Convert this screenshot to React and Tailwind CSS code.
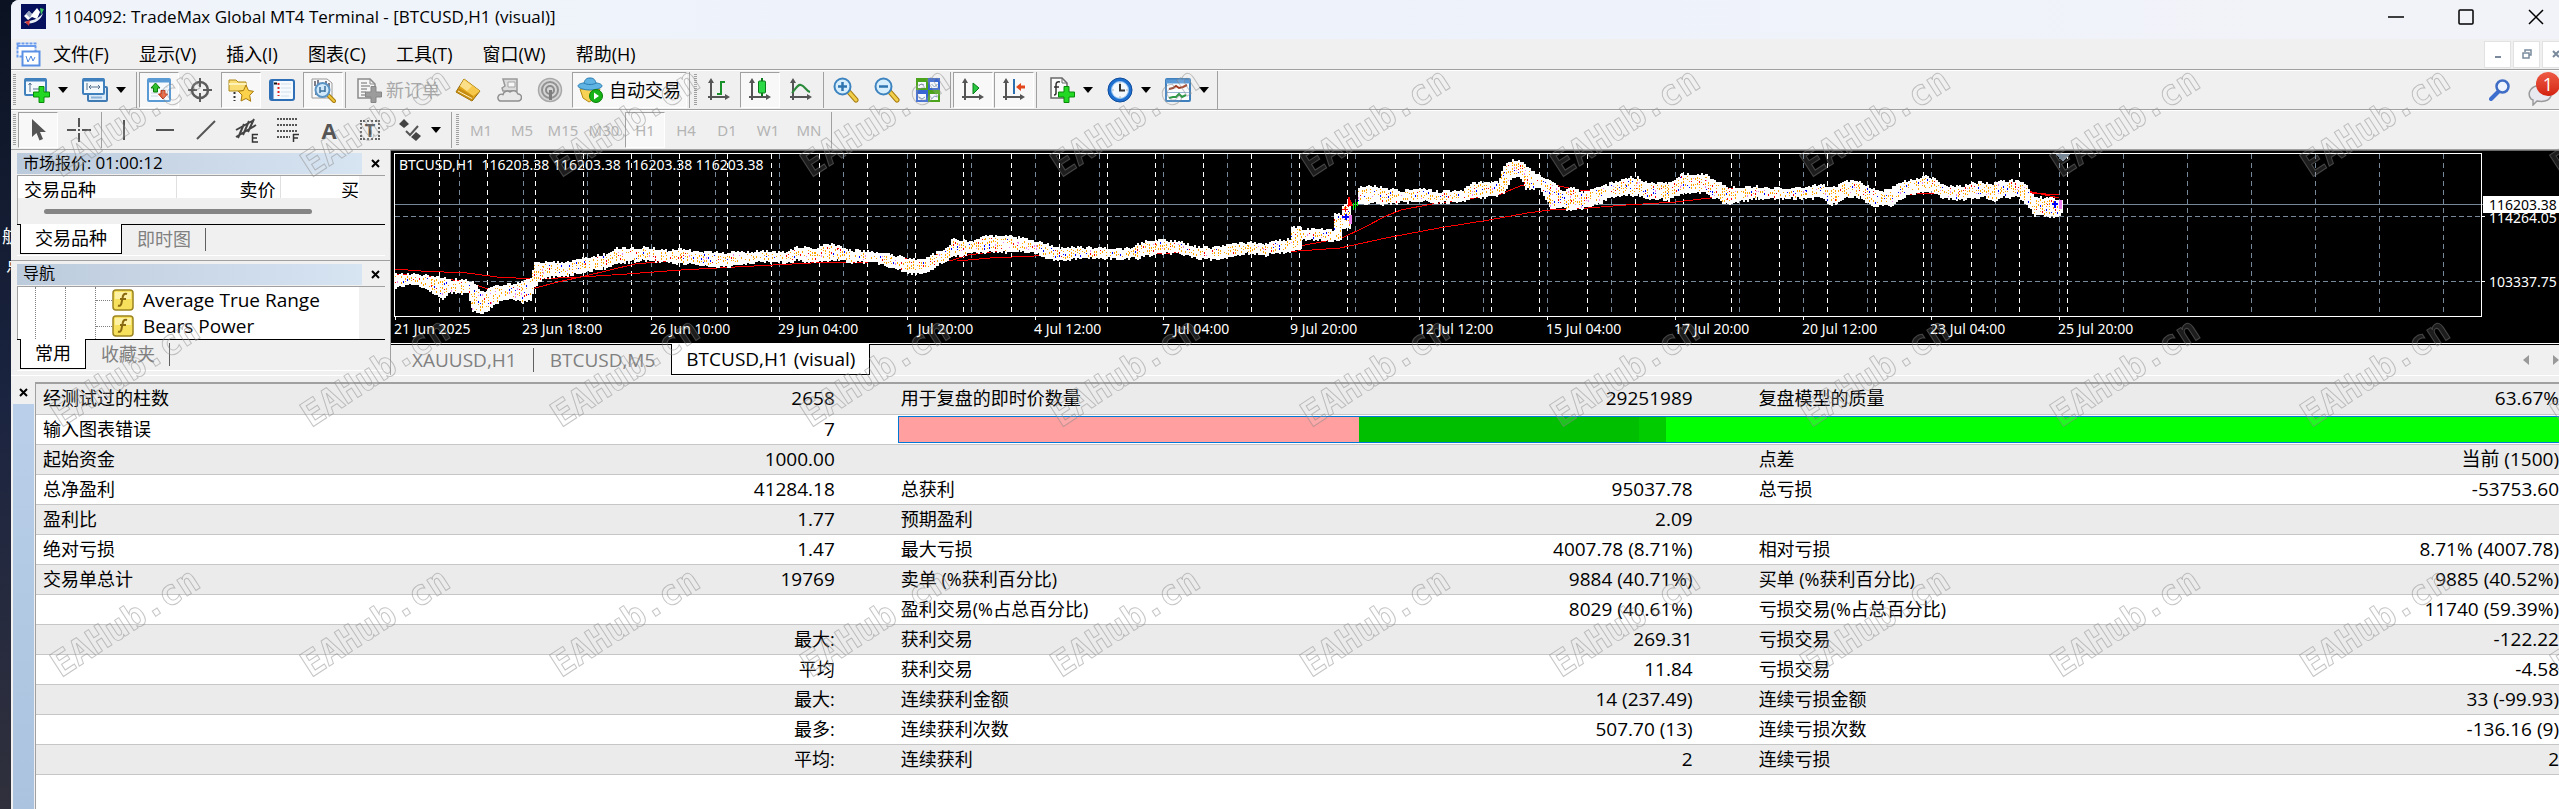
import React, { useState } from 'react';
import clsx from 'clsx';

const MENU = ['文件(F)', '显示(V)', '插入(I)', '图表(C)', '工具(T)', '窗口(W)', '帮助(H)'];
const PERIODS = ['M1', 'M5', 'M15', 'M30', 'H1', 'H4', 'D1', 'W1', 'MN'];
const CHART_TABS = ['XAUUSD,H1', 'BTCUSD,M5', 'BTCUSD,H1 (visual)'];

const REPORT = [
  ['经测试过的柱数', '2658', '用于复盘的即时价数量', '29251989', '复盘模型的质量', '63.67%'],
  ['输入图表错误', '7', 'bar'],
  ['起始资金', '1000.00', '', '', '点差', '当前 (1500)'],
  ['总净盈利', '41284.18', '总获利', '95037.78', '总亏损', '-53753.60'],
  ['盈利比', '1.77', '预期盈利', '2.09', '', ''],
  ['绝对亏损', '1.47', '最大亏损', '4007.78 (8.71%)', '相对亏损', '8.71% (4007.78)'],
  ['交易单总计', '19769', '卖单 (%获利百分比)', '9884 (40.71%)', '买单 (%获利百分比)', '9885 (40.52%)'],
  ['', '', '盈利交易(%占总百分比)', '8029 (40.61%)', '亏损交易(%占总百分比)', '11740 (59.39%)'],
  ['', '最大:', '获利交易', '269.31', '亏损交易', '-122.22'],
  ['', '平均', '获利交易', '11.84', '亏损交易', '-4.58'],
  ['', '最大:', '连续获利金额', '14 (237.49)', '连续亏损金额', '33 (-99.93)'],
  ['', '最多:', '连续获利次数', '507.70 (13)', '连续亏损次数', '-136.16 (9)'],
  ['', '平均:', '连续获利', '2', '连续亏损', '2'],
];

// share of each modelling quality level, in percent
const QUALITY = [
  { share: 27.7, className: 'bg-[#ff9f9f]' },
  { share: 16.9, className: 'bg-[#00be00]' },
  { share: 1.6, className: 'bg-[#00cc00]' },
  { share: 53.8, className: 'bg-[#00ff00]' },
];

// x, high, low
const BAND = [
  [[4, 124, 136], [22, 123, 133], [41, 126, 141], [51, 127, 148], [58, 129, 142], [76, 130, 142],
    [81, 131, 159], [91, 141, 163], [100, 137, 156], [114, 134, 147], [131, 132, 151], [139, 127, 149],
    [143, 111, 136], [152, 112, 126], [179, 111, 124], [194, 107, 121], [213, 104, 117], [225, 98, 112],
    [252, 97, 109], [275, 100, 111], [290, 99, 112], [313, 101, 114], [332, 102, 116], [363, 101, 111],
    [397, 101, 111], [405, 96, 109], [424, 98, 111], [432, 93, 109], [447, 94, 109], [458, 100, 111],
    [481, 101, 111], [500, 104, 116], [520, 109, 122], [535, 107, 122], [546, 101, 114], [556, 98, 109],
    [560, 88, 106], [581, 91, 102], [594, 85, 101], [612, 85, 101], [627, 87, 99], [646, 91, 102],
    [654, 93, 107], [662, 97, 110], [689, 97, 107], [738, 98, 107], [746, 93, 107], [765, 89, 102],
    [788, 91, 102], [803, 96, 107], [823, 97, 109], [842, 92, 105], [857, 92, 102], [872, 93, 104],
    [888, 90, 102], [898, 89, 101], [900, 76, 101], [909, 76, 99], [910, 78, 89], [935, 79, 89],
    [941, 79, 90], [943, 64, 90], [949, 64, 89], [951, 54, 76], [958, 50, 76], [960, 62, 74]],
  [[967, 37, 53], [983, 35, 52], [995, 38, 53], [1010, 40, 51], [1033, 38, 50], [1045, 41, 52],
    [1071, 39, 50], [1083, 32, 47], [1106, 31, 44], [1113, 14, 41], [1121, 9, 26], [1129, 11, 27],
    [1134, 15, 37], [1148, 26, 37], [1159, 29, 56], [1171, 41, 57], [1180, 37, 59], [1191, 41, 57],
    [1208, 37, 52], [1220, 32, 46], [1235, 27, 44], [1246, 27, 44], [1254, 32, 47], [1277, 33, 49],
    [1290, 24, 42], [1315, 23, 41], [1321, 29, 46], [1336, 37, 53], [1346, 37, 51], [1365, 36, 47],
    [1392, 38, 47], [1415, 36, 47], [1430, 33, 46], [1438, 37, 53], [1445, 36, 53], [1453, 30, 46],
    [1468, 31, 46], [1478, 37, 54], [1491, 41, 55], [1501, 37, 54], [1511, 31, 46], [1534, 26, 40],
    [1541, 27, 41], [1551, 34, 46], [1568, 36, 49], [1581, 32, 47], [1593, 32, 46], [1601, 34, 51],
    [1610, 30, 46], [1627, 30, 46], [1635, 36, 54], [1643, 47, 64], [1656, 47, 65], [1668, 49, 65],
    [1671, 50, 61]],
];

const SLOW_MA =
  '4,118 30,120 76,122 106,126 144,128 190,126 236,123 290,119 344,116 420,112 478,111 527,110 566,110 599,107 643,105 700,104 780,102 907,100 949,97 995,87 1048,77 1098,69 1136,62 1159,59 1178,58 1197,57 1235,54 1285,51 1319,47 1361,46 1450,45 1526,43 1641,42 1668,44';
const FAST_MA =
  '4,123 40,126 76,131 97,138 120,139 144,137 167,131 194,125 244,113 267,111 320,107 400,106 504,106 535,111 562,109 577,104 600,101 646,97 690,101 780,99 860,98 909,95 951,87 972,77 995,65 1010,59 1041,53 1083,47 1110,43 1129,35 1163,34 1188,39 1250,40 1300,34 1327,37 1361,39 1450,41 1526,41 1541,37 1600,40 1641,41 1668,47';

const TIMES = [
  '21 Jun 2025', '23 Jun 18:00', '26 Jun 10:00', '29 Jun 04:00', '1 Jul 20:00', '4 Jul 12:00',
  '7 Jul 04:00', '9 Jul 20:00', '12 Jul 12:00', '15 Jul 04:00', '17 Jul 20:00', '20 Jul 12:00',
  '23 Jul 04:00', '25 Jul 20:00',
];

const buildBand = () => {
  let seed = 7;
  const rand = () => {
    seed = (seed * 16807) % 2147483647;
    return seed / 2147483647;
  };
  let body = '';
  const dots = { orange: '', red: '', blue: '', violet: '' };
  BAND.forEach((part) => {
    for (let i = 0; i < part.length - 1; i++) {
      const [x0, t0, b0] = part[i];
      const [x1, t1, b1] = part[i + 1];
      for (let x = x0; x < x1; x += 2) {
        const k = (x - x0) / (x1 - x0);
        const top = Math.round(t0 + (t1 - t0) * k + rand() * 3 - 2);
        const bottom = Math.round(b0 + (b1 - b0) * k + rand() * 3 - 1);
        body += `M${x + 1} ${top}V${bottom}`;
        for (let y = top + 3; y < bottom - 3; y += 3) {
          const r = rand();
          if (r > 0.64) continue;
          const color = r < 0.47 ? 'orange' : r < 0.54 ? 'red' : r < 0.6 ? 'blue' : 'violet';
          dots[color] += `M${x}.5 ${y}v${rand() > 0.5 ? 2 : 1}`;
        }
      }
    }
  });
  return { body, dots };
};

const { body: bandPath, dots: bandDots } = buildBand();
const range = (from, to, step) => {
  const out = [];
  for (let v = from; v <= to; v += step) out.push(v);
  return out;
};

const PriceChart = () => (
  <svg
    viewBox="0 0 2168 192"
    preserveAspectRatio="xMinYMin slice"
    className="block h-[192px] w-full bg-black font-['Noto_Sans',sans-serif] text-[14px]"
    role="img"
    aria-label="BTCUSD,H1"
  >
    <g shapeRendering="crispEdges" fill="none">
      <path d={range(68, 2088, 64).map((x) => `M${x}.5 3V165`).join('')} stroke="#778899" strokeDasharray="5 4" />
      <path
        d={[...range(48, 336, 48), ...range(380, 1676, 48)].map((x) => `M${x}.5 3V165`).join('')}
        stroke="#fff"
        strokeDasharray="5 4"
      />
      <path d="M4 65.5H2090M4 130.5H2090" stroke="#778899" strokeDasharray="5 3" />
      <path d="M4 53.5H2092" stroke="#778899" />
      <path d="M3.5 2.5H2090.5V165.5H3.5Z" stroke="#fff" />
      <path d={range(4, 1700, 128).map((x) => `M${x}.5 166v3`).join('')} stroke="#fff" />
      <path d="M2091 65.5h3M2091 130.5h3" stroke="#fff" />
      <polyline points={SLOW_MA} stroke="#f00" />
      <polyline points={FAST_MA} stroke="#f00" />
      <path d={bandPath} stroke="#fff" strokeWidth="2" />
      <path d={bandDots.orange} stroke="#ffa500" />
      <path d={bandDots.red} stroke="#f00" />
      <path d={bandDots.blue} stroke="#00f" />
      <path d={bandDots.violet} stroke="#ee82ee" />
      <path d="M962.5 52v7M964.5 51v6M966.5 51v4" stroke="#0f0" />
      <path d="M958 46l3 8h-4zM951 58h6M954 55v6" fill="#f00" stroke="#f00" />
      <path d="M951 66h7M955 63v6M1661 53h6M1664 50v7" stroke="#00f" strokeWidth="2" />
      <path d="M958 64h3v9h-3zM1668 49h3v9h-3z" fill="#ee82ee" />
      <path d="M1665 3h14l-7 8z" fill="#778899" />
    </g>
    <g fill="#fff">
      <text x="8" y="19" xmlSpace="preserve">{'BTCUSD,H1  116203.38 116203.38 116203.38 116203.38'}</text>
      {TIMES.map((t, i) => (
        <text key={t} x={3 + i * 128} y="183">{t}</text>
      ))}
      <text x="2098" y="72">114264.05</text>
      <text x="2098" y="136">103337.75</text>
      <rect x="2092" y="45" width="76" height="17" />
      <text x="2098" y="59" fill="#000">116203.38</text>
    </g>
  </svg>
);

/* ---------- toolbar icons ---------- */

const Svg = ({ children, size = 26 }) => (
  <svg width={size} height={size} viewBox="0 0 26 26" fill="none" aria-hidden="true" className="shrink-0">
    {children}
  </svg>
);

const Plus = ({ x = 9, y = 9, fill = '#22d822', stroke = '#0a8a0a' }) => (
  <path
    transform={`translate(${x} ${y})`}
    d="M6 0.5h5v5.5h5.5v5H11v5.5H6V11H.5V6H6z"
    fill={fill}
    stroke={stroke}
    strokeLinejoin="round"
  />
);

const Axes = ({ children }) => (
  <Svg>
    <path d="M5 4v19M2 20h19" stroke="#555" strokeWidth="2" />
    <path d="M5 1l3 5H2zM24 20l-5 3v-6z" fill="#555" />
    {children}
  </Svg>
);

const Lens = ({ sign }) => (
  <Svg>
    <path d="M16 15l7 8" stroke="#a97d10" strokeWidth="5" strokeLinecap="round" />
    <path d="M16 15l7 8" stroke="#f2cf4a" strokeWidth="3" strokeLinecap="round" />
    <circle cx="9.5" cy="9.5" r="8" fill="#d7effc" stroke="#3c83bf" strokeWidth="2" />
    <path d={sign} stroke="#2f75b0" strokeWidth="2.5" />
  </Svg>
);

const icons = {
  newChart: (
    <Svg>
      <rect x="1" y="2" width="21" height="16" rx="1" fill="#f4f9fe" stroke="#3f80bd" strokeWidth="2" />
      <path d="M1 3h21" stroke="#3f80bd" strokeWidth="3" />
      <path d="M6 6v9M4.5 8L6 6l1.5 2M9 12h8" stroke="#54708c" />
      <Plus />
    </Svg>
  ),
  profiles: (
    <Svg>
      <rect x="6" y="10" width="19" height="14" rx="1" fill="#dcebf8" stroke="#3f7ab3" strokeWidth="2" />
      <rect x="1" y="2" width="21" height="15" rx="1" fill="#f4f9fe" stroke="#3f80bd" strokeWidth="2" />
      <path d="M1 3h21" stroke="#3f80bd" strokeWidth="3" />
      <path d="M5 6v7M8 10h10M16 8l2 2-2 2M9 8l-2 2 2 2" stroke="#54708c" />
      <path d="M9 20.5h11" stroke="#8bb2d6" strokeWidth="2" />
    </Svg>
  ),
  market: (
    <Svg>
      <rect x="2" y="2" width="22" height="22" rx="1" fill="#f7fbff" stroke="#5a9bd5" strokeWidth="2" />
      <path d="M2 4h22" stroke="#5a9bd5" strokeWidth="3" />
      <path d="M5 10h5M5 13h5M15 13h6M5 16h7M5 19h7M20 10h2" stroke="#c9d5e0" />
      <path d="M9.5 6l4.500 5h-2.500v4h-4v-4H5z" fill="#2fc02f" stroke="#0b7c0b" />
      <path d="M17 22l-4.500-5H15v-3.500h4V17h2.500z" fill="#f0623a" stroke="#b92c0b" />
    </Svg>
  ),
  crosshair: (
    <Svg>
      <circle cx="13" cy="13" r="8" stroke="#5c5c5c" strokeWidth="2.5" />
      <path d="M13 1v9M13 16v9M1 13h9M16 13h9" stroke="#5c5c5c" strokeWidth="2" />
    </Svg>
  ),
  navigator: (
    <Svg>
      <path d="M1 3h7l2 2h8v9H1z" fill="#f9dd73" stroke="#b08a1c" />
      <path d="M1 7h17" stroke="#fff2b8" strokeWidth="2" />
      <path d="M6.5 15v9" stroke="#333" strokeWidth="2" strokeDasharray="2 2" />
      <path d="M18 8l2.500 5.500 5 .8-3.800 4 1 6L18 21.500 13 24l1-6-3.700-3.700 5.200-.8z" fill="#fbd24a" stroke="#a87b10" />
    </Svg>
  ),
  dataWindow: (
    <Svg>
      <rect x="1" y="3" width="24" height="20" rx="2" fill="#f5faff" stroke="#2f6fb5" strokeWidth="2" />
      <path d="M3 4v18" stroke="#2f6fb5" strokeWidth="3" />
      <path d="M5 6.5h3" stroke="#111" strokeWidth="2" />
      <path d="M9.5 6v13" stroke="#e02020" strokeWidth="2" strokeDasharray="2 2" />
      <path d="M12 7h10M12 11h10M12 15h10M12 19h8" stroke="#d5dfe9" />
    </Svg>
  ),
  tester: (
    <Svg>
      <path d="M2 2h15l5 4v15H2z" fill="#fafafa" stroke="#999" />
      <path d="M5 4v5M8 3v6M16 4v5M19 6v6M6 14v4" stroke="#556" strokeWidth="1.5" />
      <path d="M18 18l6 6" stroke="#a97d10" strokeWidth="4" strokeLinecap="round" />
      <path d="M18 18l6 6" stroke="#f0c63a" strokeWidth="2" strokeLinecap="round" />
      <circle cx="12.5" cy="13" r="7" fill="#cfe9fb" stroke="#5b93c4" strokeWidth="2" />
      <path d="M10 10v6M15 9v6M10 14h5" stroke="#3c6f9d" strokeWidth="1.5" />
    </Svg>
  ),
  newOrder: (
    <Svg>
      <path d="M2 2h12l5 5v14H2z" fill="#f6f6f6" stroke="#8b8b8b" strokeWidth="1.5" />
      <path d="M14 2v5h5" stroke="#8b8b8b" />
      <path d="M5 6h6M5 9h9M5 12h6M5 15h5M5 18h4" stroke="#999" strokeWidth="1.5" />
      <Plus fill="#9c9c9c" stroke="#868686" />
    </Svg>
  ),
  book: (
    <Svg>
      <path d="M9 2L25 14 17 24 1 15z" fill="#e2a61c" stroke="#8f6508" />
      <path d="M9 2l16 12-7 5L5 9z" fill="#f6c94c" />
      <path d="M9 3l8 6-5 5-7-5z" fill="#fbe089" />
      <path d="M1 15l16 9 1-5L4 11z" fill="#c78d10" />
      <path d="M3 14l14 7.5" stroke="#fff3c4" />
    </Svg>
  ),
  cloud: (
    <Svg>
      <path d="M7 2h14v12H7l-1-3 3-2z" fill="#dcdcdc" stroke="#999" strokeWidth="1.5" />
      <path d="M12 5h7v5h-7z" fill="#f6f6f6" stroke="#a5a5a5" />
      <path d="M4 24h18a3.500 3.500 0 000-7 5 5 0 00-8-2 4.500 4.500 0 00-7 2.500A3.300 3.300 0 004 24z" fill="#e9e9e9" stroke="#8f8f8f" strokeWidth="1.5" />
    </Svg>
  ),
  signal: (
    <Svg>
      <circle cx="13" cy="13" r="11.5" fill="#d5d5d5" stroke="#a8a8a8" strokeWidth="1.5" />
      <circle cx="13" cy="13" r="8" stroke="#919191" strokeWidth="2" />
      <circle cx="13" cy="13" r="4" stroke="#8a8a8a" strokeWidth="2" />
      <path d="M12 13h3v10h-3z" fill="#7e7e7e" />
    </Svg>
  ),
  auto: (
    <Svg>
      <path d="M3 12h20l-4 9-7 4-6-4z" fill="#f7d254" stroke="#b58a14" />
      <path d="M1 9c0-2 4-3 6-3 1-4 3-5 6-5s5 1 6 5c2 0 6 1 6 3s-6 4-12 4S1 11 1 9z" fill="#5fb4e4" stroke="#2b7cb0" />
      <path d="M7 6c3 2 9 2 12 0" stroke="#2b7cb0" />
      <circle cx="19" cy="19" r="6.5" fill="#16b316" stroke="#0a7d0a" />
      <path d="M17 15.5l5 3.500-5 3.500z" fill="#fff" />
    </Svg>
  ),
  bars: (
    <Axes>
      <path d="M15 4v14M15 5h4M11 17h4" stroke="#18912a" strokeWidth="2" />
    </Axes>
  ),
  candles: (
    <Axes>
      <path d="M15 1v18" stroke="#0b7c1b" strokeWidth="2" />
      <rect x="11.5" y="4" width="7" height="12" rx="1" fill="#2bd845" stroke="#0b7c1b" />
    </Axes>
  ),
  line: (
    <Axes>
      <path d="M4 16C8 11 10 7 13 8c4 1 5 6 9 7" stroke="#2a8a3a" strokeWidth="2" />
    </Axes>
  ),
  zoomIn: <Lens sign="M5 9.5h9M9.5 5v9" />,
  zoomOut: <Lens sign="M5 9.5h9" />,
  tile: (
    <Svg>
      <rect x="1" y="1" width="12" height="12" fill="#4ca41c" />
      <rect x="13" y="1" width="12" height="12" fill="#3866d2" />
      <rect x="1" y="13" width="12" height="12" fill="#3866d2" />
      <rect x="13" y="13" width="12" height="12" fill="#4ca41c" />
      <path d="M3 5h8v6H3zM15 5h8v6h-8zM3 17h8v6H3zM15 17h8v6h-8z" fill="#f4f8ff" />
      <path d="M4 9l2-2 3 1M16.500 7l3 3 3-3M4 20l3 2 3-2M16.500 22l3-3 3 1" stroke="#7f98b8" />
    </Svg>
  ),
  autoScroll: (
    <Axes>
      <path d="M13 6l6 5-6 6z" fill="#27c83f" stroke="#0b7c1b" />
    </Axes>
  ),
  shift: (
    <Axes>
      <path d="M13 2v15" stroke="#2a6fb0" strokeWidth="2" />
      <path d="M15 10l5-4v2.500h4v3h-4V14z" fill="#e2481c" />
    </Axes>
  ),
  indicator: (
    <Svg>
      <path d="M2 1h11l5 5v15H2z" fill="#fdfdfd" stroke="#6a6a6a" strokeWidth="1.5" />
      <path d="M13 1v5h5" stroke="#6a6a6a" />
      <path d="M11 5c-3-1-4 1-4 3v8c0 2-1 2-2 2M5 10h5" stroke="#333" strokeWidth="1.5" />
      <Plus />
    </Svg>
  ),
  clock: (
    <Svg>
      <circle cx="13" cy="13" r="12" fill="#1d6fd0" stroke="#0f4a99" />
      <circle cx="13" cy="13" r="8.5" fill="#f3f8fd" stroke="#8fc1f2" />
      <path d="M13 7v6.500h5" stroke="#333" strokeWidth="2" />
      <path d="M13 5.500v1M13 19.500v1M5.500 13h1M19.500 13h1" stroke="#777" />
    </Svg>
  ),
  template: (
    <Svg>
      <rect x="1" y="2" width="24" height="22" rx="1" fill="#fbfdff" stroke="#3f80bd" strokeWidth="2" />
      <path d="M1 4.500h24" stroke="#5b9ad6" strokeWidth="4" />
      <path d="M4 12l4-1 3-2 3 2 4-1 4-2" stroke="#a33a1e" strokeWidth="2" />
      <path d="M2 15.500h22" stroke="#9ab8d4" />
      <path d="M4 21l4-1 3 0 3-3 3 3 4-2" stroke="#2f9a45" strokeWidth="2" />
    </Svg>
  ),
  cursor: (
    <Svg>
      <path d="M7 2v18l4.500-4 3 7.500 3.500-1.500-3-7h6z" fill="#555" />
    </Svg>
  ),
  cross: (
    <Svg>
      <path d="M13 1v9M13 16v9M1 13h9M16 13h9M12 13h2" stroke="#555" strokeWidth="2" />
    </Svg>
  ),
  vline: (
    <Svg>
      <path d="M13 3v20" stroke="#555" strokeWidth="2" />
    </Svg>
  ),
  hline: (
    <Svg>
      <path d="M4 13h18" stroke="#555" strokeWidth="2" />
    </Svg>
  ),
  trend: (
    <Svg>
      <path d="M4 22L22 4" stroke="#555" strokeWidth="2" />
    </Svg>
  ),
  channel: (
    <Svg>
      <path d="M2 13L20 3M2 20L22 8M4 21l6-14M9 18l6-14M14 15l6-13" stroke="#444" strokeWidth="2" />
      <path d="M24 17.500h-5.500V25H24M18 21h5" stroke="#333" strokeWidth="1.5" />
    </Svg>
  ),
  fibo: (
    <Svg>
      <path d="M2 2h21M2 8h21M2 14h21M2 20h13" stroke="#555" strokeWidth="2" strokeDasharray="2 1" />
      <path d="M18.500 17v8M18 17.500h6M18 21h5" stroke="#333" strokeWidth="1.5" />
    </Svg>
  ),
  arrows: (
    <Svg>
      <path d="M7 2l5 5-5 4-5-4zM19 15l5 4-5 5-5-4z" fill="#444" />
      <path d="M9 14l4 4 8-9" stroke="#555" strokeWidth="2" />
    </Svg>
  ),
};

const Caret = () => (
  <svg width="10" height="6" viewBox="0 0 10 6" aria-hidden="true" className="shrink-0">
    <path d="M0 0h10L5 6z" fill="#000" />
  </svg>
);

const PRESSED = 'border border-t-[#a0a0a0] border-l-[#a0a0a0] border-r-white border-b-white bg-[#f8f8f8]';

const ToolButton = ({ icon, label, pressed, children }) => (
  <button
    type="button"
    aria-label={label}
    className={clsx('flex h-9 w-10 shrink-0 items-center justify-center', pressed && PRESSED)}
  >
    {icon ? icons[icon] : children}
  </button>
);

const DropButton = ({ icon, label }) => (
  <button type="button" aria-label={label} className="flex h-9 w-[58px] shrink-0 items-center gap-2 pl-1.5">
    {icons[icon]}
    <Caret />
  </button>
);

const Divider = () => <div className="mx-0.5 h-9 w-px shrink-0 bg-[#a0a0a0]" />;
const Grip = () => <div className="mx-0.5 h-8 w-[3px] shrink-0 bg-[repeating-linear-gradient(#a0a0a0_0_1px,#f0f0f0_1px_2px)]" />;

const Toolbar = () => (
  <div className="flex h-10 items-center border-t border-b border-t-white border-b-[#a0a0a0]">
    <Grip />
    <DropButton icon="newChart" label="新图表" />
    <DropButton icon="profiles" label="图表夹" />
    <Divider />
    <div className="flex gap-px">
      <ToolButton icon="market" label="市场报价" pressed />
      <ToolButton icon="crosshair" label="数据" />
      <ToolButton icon="navigator" label="导航" pressed />
      <ToolButton icon="dataWindow" label="终端" />
      <ToolButton icon="tester" label="测试" pressed />
    </div>
    <Divider />
    <button type="button" className="flex h-9 w-[100px] shrink-0 items-center gap-1 pl-2 text-[18px] text-[#a8a8a8]">
      {icons.newOrder}
      新订单
    </button>
    <div className="flex gap-px">
      <ToolButton icon="book" label="编辑器" />
      <ToolButton icon="cloud" label="云" />
      <ToolButton icon="signal" label="信号" />
    </div>
    <button type="button" className={clsx('ml-0.5 flex h-9 w-[115px] shrink-0 items-center gap-1.5 pl-1', PRESSED)}>
      {icons.auto}
      <span className="text-[18px] whitespace-nowrap">自动交易</span>
    </button>
    <Divider />
    <Grip />
    <div className="flex gap-px">
      <ToolButton icon="bars" label="柱状图" />
      <ToolButton icon="candles" label="蜡烛图" pressed />
      <ToolButton icon="line" label="折线图" />
    </div>
    <Divider />
    <div className="flex gap-px">
      <ToolButton icon="zoomIn" label="放大" />
      <ToolButton icon="zoomOut" label="缩小" />
      <ToolButton icon="tile" label="平铺" />
    </div>
    <Divider />
    <div className="flex gap-px">
      <ToolButton icon="autoScroll" label="自动滚动" pressed />
      <ToolButton icon="shift" label="图表平移" pressed />
    </div>
    <Divider />
    <div className="flex h-full items-center border-r border-[#a0a0a0] pl-1">
      <DropButton icon="indicator" label="指标" />
      <DropButton icon="clock" label="周期" />
      <DropButton icon="template" label="模板" />
    </div>
    <div className="ml-auto flex items-center gap-4">
      <button type="button" aria-label="搜索">
        <svg width="22" height="22" viewBox="0 0 22 22" fill="none" aria-hidden="true">
          <path d="M10 12l-8 8" stroke="#3c6fce" strokeWidth="4" strokeLinecap="round" />
          <circle cx="13.5" cy="7.5" r="6" fill="#eef4ff" stroke="#3f6dc6" strokeWidth="2.5" />
        </svg>
      </button>
      <button type="button" aria-label="消息" className="relative h-9 w-8">
        <svg width="26" height="32" viewBox="0 0 26 32" aria-hidden="true">
          <path d="M9 12c-6 2-9 8-5 13l2 1v5l4-4c6 1 12 0 14-5z" fill="#e8e8f0" stroke="#9a9a9a" strokeWidth="1.5" />
        </svg>
        <span className="absolute top-0 left-[9px] flex h-6 w-6 items-center justify-center rounded-full bg-linear-to-b from-[#ee5a44] to-[#d3200d] text-[18px] text-white">
          1
        </span>
      </button>
    </div>
  </div>
);

const DrawBar = () => {
  const [period, setPeriod] = useState('H1');
  return (
    <div className="flex h-10 items-center border-t border-b border-t-white border-b-[#a0a0a0]">
      <Grip />
      <div className="flex gap-px">
        <ToolButton icon="cursor" label="光标" pressed />
        <ToolButton icon="cross" label="十字" />
      </div>
      <Divider />
      <div className="flex gap-px">
        <ToolButton icon="vline" label="垂直线" />
        <ToolButton icon="hline" label="水平线" />
        <ToolButton icon="trend" label="趋势线" />
        <ToolButton icon="channel" label="通道" />
        <ToolButton icon="fibo" label="斐波那契" />
        <ToolButton label="文字">
          <span className="text-[22px] font-bold text-[#555]">A</span>
        </ToolButton>
        <ToolButton label="标签">
          <span className="flex h-5 w-5 items-center justify-center border-2 border-dotted border-[#666] text-[18px] font-bold text-[#555]">
            T
          </span>
        </ToolButton>
        <DropButton icon="arrows" label="箭头" />
      </div>
      <Divider />
      <Grip />
      <div className="flex gap-px font-['Noto_Sans',sans-serif]">
        {PERIODS.map((p) => (
          <button
            key={p}
            type="button"
            onClick={() => setPeriod(p)}
            className={clsx(
              'flex h-9 w-10 shrink-0 items-center justify-center text-[15px] text-[#b4b4b4]',
              p === period && PRESSED,
            )}
          >
            {p}
          </button>
        ))}
      </div>
      <Divider />
    </div>
  );
};

const TitleBar = () => (
  <header className="flex h-[39px] items-center bg-linear-to-r from-[#f0f4fa] via-[#edf2fb] to-[#f2f3f8] pb-1.5 pl-2.5">
    <svg width="25" height="25" viewBox="0 0 25 25" aria-hidden="true">
      <rect width="25" height="25" fill="#06105c" />
      <path d="M3 18c5 4 17 0 19-9-4 6-12 8-19 9z" fill="#e8ecf4" />
      <path d="M3 12l5-5 3 3 5-6 3 4-3 7-5-2-4 3z" fill="#fff" />
      <path d="M5 10l3-3 3 3-2 4z" fill="#9aa6c0" />
      <path d="M19 4l4 1-3 6z" fill="#3fbf62" />
      <path d="M4 18l5-2-1 6z" fill="#d23a3a" />
    </svg>
    <h1 className="ml-2 text-[17px]">1104092: TradeMax Global MT4 Terminal - [BTCUSD,H1 (visual)]</h1>
    <div className="ml-auto flex gap-[54px] pr-[15px]">
      <button type="button" aria-label="最小化">
        <svg width="16" height="16" viewBox="0 0 16 16"><path d="M0 8h16" stroke="#000" strokeWidth="1.5" /></svg>
      </button>
      <button type="button" aria-label="最大化">
        <svg width="16" height="16" viewBox="0 0 16 16">
          <rect x="1" y="1" width="14" height="14" rx="1" fill="none" stroke="#000" strokeWidth="1.5" />
        </svg>
      </button>
      <button type="button" aria-label="关闭">
        <svg width="16" height="16" viewBox="0 0 16 16"><path d="M1 1l14 14M15 1L1 15" stroke="#000" strokeWidth="1.5" /></svg>
      </button>
    </div>
  </header>
);

const MenuBar = () => (
  <nav className="flex h-[31px] items-center border-b border-[#a0a0a0] pl-[5px]">
    <svg width="25" height="25" viewBox="0 0 25 25" fill="none" aria-hidden="true">
      <rect x="1.5" y="1.5" width="18" height="13" fill="#fff" stroke="#6b9bea" strokeWidth="2" strokeDasharray="3 1" />
      <path d="M1 4h19" stroke="#6b9bea" strokeWidth="2" />
      <rect x="6.5" y="9.5" width="17" height="14" fill="#fff" stroke="#5a8fe6" strokeWidth="2" />
      <path d="M10 14l2 6 3-6 2 5 2-4" stroke="#4b85dd" />
    </svg>
    <div className="ml-3 flex gap-[30px] text-[18px]">
      {MENU.map((m) => (
        <button key={m} type="button" className="whitespace-nowrap">{m}</button>
      ))}
    </div>
    <div className="ml-auto flex gap-0.5 overflow-hidden text-[#7a8a9c]">
      <button type="button" aria-label="最小化图表" className="flex h-[27px] w-[27px] items-center justify-center border border-[#e2e2e2] bg-white">
        <svg width="12" height="12" viewBox="0 0 12 12"><path d="M3 9h6" stroke="currentColor" strokeWidth="2" /></svg>
      </button>
      <button type="button" aria-label="还原图表" className="flex h-[27px] w-[27px] items-center justify-center border border-[#e2e2e2] bg-white">
        <svg width="10" height="10" viewBox="0 0 10 10" fill="none" stroke="currentColor" strokeWidth="1.5">
          <path d="M3 3V1h6v5H7M1 4h6v5H1z" />
        </svg>
      </button>
      <button type="button" aria-label="关闭图表" className="flex h-[27px] w-[17px] items-center justify-end border border-r-0 border-[#e2e2e2] bg-white">
        <svg width="7" height="8" viewBox="0 0 7 8"><path d="M1 1l6 6M7 1L1 7" stroke="currentColor" strokeWidth="2" /></svg>
      </button>
    </div>
  </nav>
);

const CloseMark = () => (
  <button type="button" aria-label="关闭面板" className="flex h-5 w-5 items-center justify-center">
    <svg width="9" height="9" viewBox="0 0 9 9"><path d="M1 1l7 7M8 1L1 8" stroke="#000" strokeWidth="2" /></svg>
  </button>
);

const PanelTabs = ({ active, other }) => (
  <div className="flex h-8 items-start border-b border-white">
    <div className="h-px w-[3px] bg-black" />
    <button type="button" className="h-[30px] border border-t-0 border-black bg-white px-[14px] text-[18px] leading-[29px]">
      {active}
    </button>
    <div className="flex h-[30px] flex-1 items-center border-t border-black pl-[15px]">
      <button type="button" className="pr-[14px] text-[18px] leading-[23px] text-[#808080]">{other}</button>
      <div className="h-[23px] w-px bg-[#606060]" />
    </div>
  </div>
);

const PanelTitle = ({ children }) => (
  <div className="flex items-center gap-[3px]">
    <h2 className="h-[21px] flex-1 bg-linear-to-r from-[#bccbdc] to-[#d7e4f2] pl-1.5 text-[16px] leading-[19px]">{children}</h2>
    <CloseMark />
  </div>
);

const FuncIcon = () => (
  <svg width="22" height="22" viewBox="0 0 22 22" aria-hidden="true">
    <rect x="1" y="1" width="20" height="20" rx="3" fill="#f7e05c" stroke="#9c8420" strokeWidth="1.5" />
    <path d="M3 3h16v7H3z" fill="#fcf1a4" />
    <path d="M15 5c-3-1-4 1-4.500 4L9.500 14c-.5 3-2 3-3.500 2.500M8 10h6" fill="none" stroke="#8a6a10" strokeWidth="2" />
  </svg>
);

const SidePanels = () => (
  <aside className="flex w-[380px] shrink-0 flex-col border-r border-[#a0a0a0]">
    <section className="flex flex-col border-b border-[#a0a0a0] pt-[3px] pr-[5px] pb-1 pl-1.5">
      <PanelTitle>市场报价: <span className="text-[17px]">01:00:12</span></PanelTitle>
      <div className="mt-px border-t border-l border-[#a0a0a0] pr-[26px]">
        <div className="h-[22px] overflow-hidden bg-white">
          <table className="w-full table-fixed border-collapse text-[18px] leading-[29px]">
            <thead>
              <tr>
                <th className="w-[158px] border-r border-[#e0e0e0] pl-1.5 text-left font-normal">交易品种</th>
                <th className="w-[104px] border-r border-[#e0e0e0] pr-1 text-right font-normal">卖价</th>
                <th className="text-right font-normal">买</th>
              </tr>
            </thead>
          </table>
        </div>
      </div>
      <div className="flex h-[26px] items-center border-l border-[#a0a0a0] pl-[26px]">
        <div className="h-[5px] w-[268px] rounded-full bg-[#858585]" />
      </div>
      <PanelTabs active="交易品种" other="即时图" />
    </section>
    <section className="flex flex-col pt-[3px] pr-[5px] pl-1.5">
      <PanelTitle>导航</PanelTitle>
      <div className="mt-px border-t border-l border-[#a0a0a0] pr-[26px]">
        <ul className="flex bg-white pl-[17px] text-[19px] leading-[26px]">
          <li className="w-[30px] border-l border-dotted border-[#808080]" aria-hidden="true" />
          <li className="w-[30px] border-l border-dotted border-[#808080]" aria-hidden="true" />
          <li className="flex-1 border-l border-dotted border-[#808080]">
            {['Average True Range', 'Bears Power'].map((name) => (
              <div key={name} className="flex h-[26px] items-center">
                <div className="w-4 border-t border-dotted border-[#808080]" />
                <FuncIcon />
                <span className="ml-[9px]">{name}</span>
              </div>
            ))}
          </li>
        </ul>
      </div>
      <PanelTabs active="常用" other="收藏夹" />
    </section>
  </aside>
);

const ChartTabs = () => (
  <div className="flex h-8 items-start border-t border-white text-[19px]">
    <div className="flex h-[31px] items-center border-t border-black pl-[21px] text-[#808080]">
      <button type="button" className="pr-4">{CHART_TABS[0]}</button>
      <div className="h-6 w-px bg-[#606060]" />
      <button type="button" className="px-4">{CHART_TABS[1]}</button>
    </div>
    <button type="button" className="h-[31px] border border-t-0 border-black bg-white px-3.5 leading-[29px]">{CHART_TABS[2]}</button>
    <div className="flex h-[31px] flex-1 items-center justify-end gap-6 border-t border-black">
      <button type="button" aria-label="向左">
        <svg width="6" height="10" viewBox="0 0 6 10"><path d="M6 0v10L0 5z" fill="#999" /></svg>
      </button>
      <button type="button" aria-label="向右">
        <svg width="6" height="10" viewBox="0 0 6 10"><path d="M0 0v10l6-5z" fill="#999" /></svg>
      </button>
    </div>
  </div>
);

const QualityBar = () => (
  <div className="ml-1 flex h-[27px] border border-r-0 border-[#0078d7]">
    {QUALITY.map((q) => (
      <div key={q.share} className={q.className} style={{ width: `${q.share}%` }} />
    ))}
  </div>
);

const Report = () => (
  <section className="flex flex-1 border-t border-white pt-1.5">
    <div className="flex w-6 shrink-0 flex-col pr-px pl-0.5">
      <CloseMark />
      <div className="mt-0.5 flex-1 bg-linear-to-b from-[#b9cfea] to-[#abc3de]" />
    </div>
    <div className="flex-1 border-t-2 border-l border-[#a0a0a0] bg-white">
      <table className="w-full table-fixed border-collapse text-[18px]">
        <colgroup>
          <col className="w-[17%]" />
          <col className="w-[17%]" />
          <col className="w-[17%]" />
          <col className="w-[17%]" />
          <col className="w-[16%]" />
          <col className="w-[16%]" />
        </colgroup>
        <tbody>
          {REPORT.map((row, i) => (
            <tr key={i} className="h-[30px] border-b border-[#c6c6c6] odd:bg-[#ebebeb]">
              {row.map((cell, j) => {
                if (cell === 'bar') {
                  return (
                    <td key={j} colSpan={4} className="p-0"><QualityBar /></td>
                  );
                }
                if (j % 2 === 0) return <td key={j} className="p-0 pl-[7px] leading-[29px] whitespace-nowrap">{cell}</td>;
                return (
                  <td key={j} className={clsx('p-0 text-right leading-[29px] whitespace-nowrap', j < 5 && 'pr-[59px]', /\d/.test(cell) && 'text-[19px]')}>
                    {cell}
                  </td>
                );
              })}
            </tr>
          ))}
        </tbody>
      </table>
    </div>
  </section>
);

const Watermark = () => (
  <svg className="pointer-events-none absolute inset-0 h-full w-full" aria-hidden="true">
    <defs>
      <pattern id="mark" width="250" height="250" patternUnits="userSpaceOnUse">
        <text
          transform="translate(61 178) rotate(-33)"
          className="font-['DejaVu_Sans_Mono',monospace] text-[35px] font-bold"
          fill="#efefef"
          fillOpacity="0.12"
          stroke="#808080"
          strokeOpacity="0.45"
        >
          EAHub.cn
        </text>
      </pattern>
    </defs>
    <rect width="100%" height="100%" fill="url(#mark)" />
  </svg>
);

const App = () => (
  <div className="relative flex min-h-screen overflow-hidden bg-linear-to-b from-[#0b1322] via-[#1b2440] to-[#30303c] font-['Open_Sans','Noto_Sans_CJK_SC',sans-serif] text-black">
    {/* desktop behind the window */}
    <div className="w-[11px] shrink-0 overflow-hidden pt-[222px] pl-0.5 text-[18px] leading-7 whitespace-nowrap text-white">
      <div>航</div>
      <div className="pl-1">点</div>
    </div>

    <main className="flex min-w-0 flex-1 flex-col overflow-hidden rounded-tl-lg bg-[#f0f0f0]">
      <TitleBar />
      <MenuBar />
      <Toolbar />
      <DrawBar />
      <div className="flex">
        <SidePanels />
        <div className="flex min-w-0 flex-1 flex-col border-t border-[#696969]">
          <PriceChart />
          <ChartTabs />
        </div>
      </div>
      <Report />
    </main>
    <Watermark />
  </div>
);

export default App;
